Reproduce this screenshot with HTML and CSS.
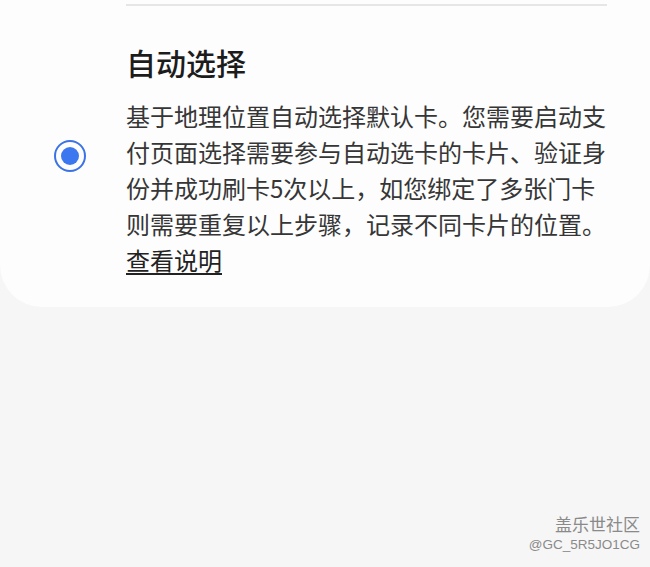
FILE: index.html
```html
<!DOCTYPE html>
<html lang="zh-CN">
<head>
    <meta charset="UTF-8">
    <meta name="viewport" content="width=device-width, initial-scale=1.0">
    <title>自动选择</title>
    <link rel="stylesheet" href="styles.css">
</head>
<body>
    <div class="card">
        <div class="divider"></div>
        <div class="option">
            <div class="radio-col">
                <span class="radio checked"></span>
            </div>
            <div class="option-body">
                <h2 class="option-title">自动选择</h2>
                <p class="option-desc">基于地理位置自动选择默认卡。您需要启动支付页面选择需要参与自动选卡的卡片、验证身份并成功刷卡5次以上，如您绑定了多张门卡则需要重复以上步骤，记录不同卡片的位置。</p>
                <a class="option-link" href="#">查看说明</a>
            </div>
        </div>
    </div>

    <div class="watermark">
        <div class="wm-name">盖乐世社区</div>
        <div class="wm-id">@GC_5R5JO1CG</div>
    </div>
</body>
</html>
```

FILE: styles.css
```css
body {
    margin: 0;
    background: #f6f6f6;
    font-family: "Noto Sans CJK SC", "Noto Sans", sans-serif;
    height: 567px;
    overflow: hidden;
    position: relative;
}

.card {
    background: #fdfdfd;
    border-radius: 0 0 42px 42px;
    padding: 4px 43px 29px 0;
}

.divider {
    height: 2px;
    background: #e6e6e6;
    margin-left: 126px;
}

.option {
    display: flex;
    align-items: center;
    margin-top: 36px;
}

.radio-col {
    width: 126px;
    display: flex;
    justify-content: center;
    padding-left: 14px;
    box-sizing: border-box;
}

.radio {
    width: 28px;
    height: 28px;
    border: 2px solid #3b73e6;
    border-radius: 50%;
    display: flex;
    align-items: center;
    justify-content: center;
    margin-top: -8px;
}

.radio.checked::after {
    content: "";
    width: 18px;
    height: 18px;
    border-radius: 50%;
    background: #3b78f0;
}

.option-body {
    flex: 1;
}

.option-title {
    margin: 0 0 16px;
    font-size: 30px;
    line-height: 40px;
    font-weight: 500;
    color: #1c1c1c;
}

.option-desc {
    margin: 0;
    font-size: 24px;
    line-height: 36px;
    color: #363636;
}

.option-link {
    display: inline-block;
    font-size: 24px;
    line-height: 36px;
    color: #222;
    text-decoration: underline;
    text-decoration-thickness: 2px;
    text-underline-offset: 3px;
}

.watermark {
    position: absolute;
    right: 10px;
    bottom: 12px;
    text-align: right;
    color: #8a8a8a;
}

.wm-name {
    font-size: 17px;
    line-height: 22px;
}

.wm-id {
    font-family: "Liberation Sans", sans-serif;
    font-size: 13.5px;
    line-height: 20px;
}
```
